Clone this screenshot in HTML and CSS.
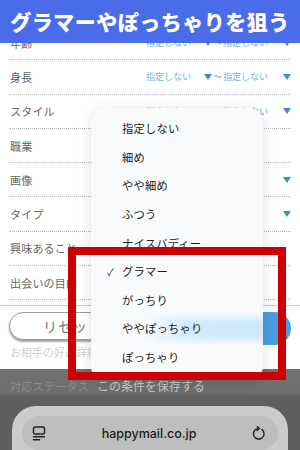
FILE: index.html
```html
<!DOCTYPE html>
<html lang="ja">
<head>
<meta charset="utf-8">
<title>検索条件</title>
<link rel="stylesheet" href="styles.css">
</head>
<body>
<div class="screen">
  <div class="rows">
    <div class="row">
      <span class="label">年齢</span>
      <div class="range"><span class="val">指定しない</span><i class="tri"></i><span class="tilde">〜</span><span class="val">指定しない</span><i class="tri end"></i></div>
    </div>
    <div class="row">
      <span class="label">身長</span>
      <div class="range"><span class="val">指定しない</span><i class="tri"></i><span class="tilde">〜</span><span class="val">指定しない</span><i class="tri end"></i></div>
    </div>
    <div class="row">
      <span class="label">スタイル</span>
      <div class="range"><span class="val">指定しない</span><i class="tri"></i><span class="tilde">〜</span><span class="val">指定しない</span><i class="tri end"></i></div>
    </div>
    <div class="row"><span class="label">職業</span></div>
    <div class="row"><span class="label">画像</span><i class="tri right"></i></div>
    <div class="row"><span class="label">タイプ</span><i class="tri right"></i></div>
    <div class="row"><span class="label">興味あること</span></div>
    <div class="row"><span class="label">出会いの目的</span></div>
  </div>
  <div class="divider"></div>
  <div class="actions">
    <button class="reset">リセット</button>
    <button class="search">検索</button>
  </div>
  <div class="detail">お相手の好み詳細</div>
  <div class="footer">
    <div class="status">
      <span class="status-label">対応ステータス</span>
      <span class="save">この条件を保存する</span>
    </div>
    <div class="browser">
      <div class="urlbar">
        <svg class="ico" width="14" height="15" viewBox="0 0 14 15" fill="none" stroke="#222" stroke-width="1.5" stroke-linecap="round">
          <rect x="1.5" y="1" width="11" height="7" rx="1.6"/>
          <line x1="1.5" y1="10.8" x2="12.5" y2="10.8"/>
          <line x1="1.5" y1="13.8" x2="7.5" y2="13.8"/>
        </svg>
        <span class="url">happymail.co.jp</span>
        <svg class="ico" width="14" height="15" viewBox="0 0 14 15" fill="none" stroke="#222" stroke-width="1.4" stroke-linecap="round" stroke-linejoin="round">
          <path d="M9.8 3.4 A5.3 5.3 0 1 1 5.4 2.6"/>
          <path d="M5.2 0.6 L7.3 2.6 L5.2 4.6"/>
        </svg>
      </div>
    </div>
  </div>

  <div class="menu">
    <div class="item">指定しない</div>
    <div class="item">細め</div>
    <div class="item">やや細め</div>
    <div class="item">ふつう</div>
    <div class="item">ナイスバディー</div>
    <div class="item checked"><span class="check">✓</span>グラマー</div>
    <div class="item">がっちり</div>
    <div class="item glow">ややぽっちゃり</div>
    <div class="item">ぽっちゃり</div>
  </div>

  <div class="redbox"></div>

  <div class="banner">グラマーやぽっちゃりを狙う</div>
</div>
</body>
</html>
```

FILE: styles.css
```css
* { box-sizing: border-box; }
html, body {
  margin: 0;
  padding: 0;
  background: #fff;
}
body {
  font-family: "Noto Sans CJK JP", "Noto Sans", sans-serif;
  width: 300px;
  height: 450px;
  overflow: hidden;
}
.screen {
  position: relative;
  width: 300px;
  height: 450px;
  overflow: hidden;
  display: flex;
  flex-direction: column;
}
.rows {
  padding-top: 26px;
}
.row {
  height: 34.3px;
  margin: 0 9px;
  border-bottom: 1px dotted #b9b9b9;
  display: flex;
  align-items: center;
}
.label {
  width: 138px;
  padding-left: 1px;
  font-size: 11px;
  color: #666;
  letter-spacing: 0.2px;
}
.range {
  display: flex;
  align-items: center;
}
.val {
  font-size: 9px;
  color: #72b3df;
  width: 45px;
}
.tri {
  display: block;
  width: 0;
  height: 0;
  border-left: 4px solid transparent;
  border-right: 4px solid transparent;
  border-top: 6px solid #3e8ad3;
  margin-left: 13px;
}
.tri.end { margin-left: 15px; }
.tri.right { margin-left: auto; margin-right: 0; }
.tilde {
  font-size: 9px;
  color: #5e9ccc;
  width: 10px;
  margin-left: 1px;
}
.divider {
  margin-top: 5px;
  height: 1px;
  background: #c9c9c9;
}
.actions {
  height: 40px;
  padding: 6px 9px 0;
  display: flex;
  justify-content: space-between;
  align-items: flex-start;
}
.reset {
  width: 128px;
  height: 28px;
  border: 1px solid #9a9a9a;
  border-radius: 14px;
  background: #fff;
  box-shadow: 0 2px 2px rgba(0,0,0,0.35);
  font-family: inherit;
  font-size: 14px;
  color: #777;
  letter-spacing: 1px;
  padding: 0;
}
.search {
  width: 130px;
  height: 33px;
  border: none;
  border-radius: 17px;
  background: #4a9de3;
  color: #fff;
  font-family: inherit;
  font-size: 13px;
}
.detail {
  height: 23px;
  padding-left: 10px;
  font-size: 11px;
  line-height: 12px;
  color: #d0d0d0;
}
.footer {
  flex: 1;
  background: linear-gradient(#727272 0, #6e6e6e 24px, #5f5f5f 28px, #5f5f5f 100%);
  display: flex;
  flex-direction: column;
}
.status {
  height: 37px;
  display: flex;
  align-items: center;
  padding: 0 0 4px 10px;
}
.status-label {
  width: 87px;
  font-size: 11px;
  color: #8c8c8c;
  letter-spacing: 0.3px;
}
.save {
  font-size: 12px;
  color: #c9c9c9;
}
.browser {
  flex: 1;
  margin: 0 12px;
  background: #cbcbcb;
  border-radius: 24px 24px 0 0;
  padding: 10px 10px 0;
}
.urlbar {
  height: 34px;
  border-radius: 17px;
  background: #bebebe;
  display: flex;
  align-items: center;
  justify-content: space-between;
  padding: 0 12px 0 10px;
}
.url {
  font-family: "Inter", "Noto Sans", sans-serif;
  font-size: 12.5px;
  font-weight: 500;
  color: #1c1c1c;
}
.ico { display: block; }

.menu {
  position: absolute;
  left: 91px;
  top: 108px;
  width: 172px;
  height: 272px;
  border-radius: 14px;
  padding-top: 6px;
  background: #f9fafc;
  box-shadow: 0 3px 14px rgba(0,0,0,0.13);
  overflow: hidden;
}
.item {
  position: relative;
  z-index: 0;
  height: 28.6px;
  display: flex;
  align-items: center;
  padding-left: 31px;
  font-size: 11.3px;
  color: #1d1d1d;
  letter-spacing: 0.2px;
}
.check {
  position: absolute;
  left: 16px;
  font-size: 10px;
  color: #222;
}
.glow::before {
  content: "";
  position: absolute;
  z-index: -1;
  left: 52px;
  right: -6px;
  top: 4px;
  bottom: 3px;
  background: linear-gradient(90deg, rgba(205,233,251,0) 0, rgba(205,233,251,0.95) 45px, #cce9fb 100%);
  filter: blur(3px);
}
.redbox {
  position: absolute;
  left: 68px;
  top: 247px;
  width: 218px;
  height: 133px;
  border: 8px solid #cc0000;
}
.banner {
  position: absolute;
  left: 0;
  top: 0;
  width: 300px;
  height: 43px;
  background: #4a6ce8;
  color: #fff;
  font-size: 21px;
  font-weight: 900;
  letter-spacing: 0.5px;
  display: flex;
  align-items: center;
  justify-content: center;
  padding-bottom: 2px;
}
```
